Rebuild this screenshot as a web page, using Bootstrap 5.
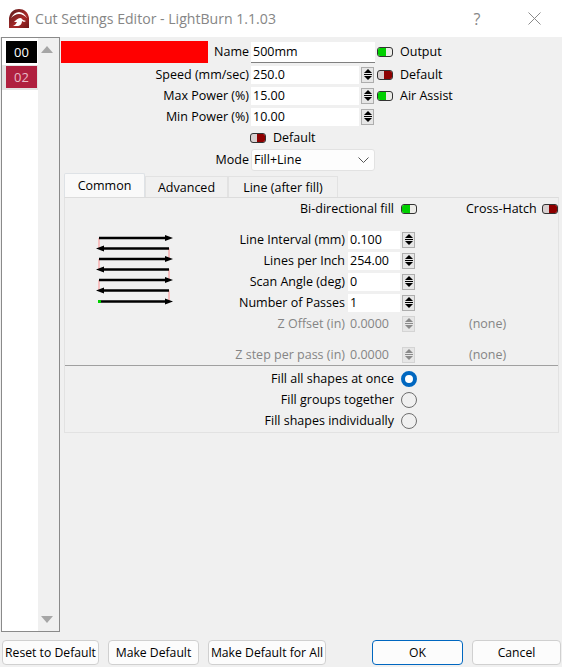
<!DOCTYPE html>
<html lang="en"><head><meta charset="utf-8"><title>Cut Settings Editor</title>
<link rel="stylesheet" href="https://cdn.jsdelivr.net/npm/bootstrap@5.3.0/dist/css/bootstrap.min.css">
<style>
html,body{height:667px;overflow:hidden}
body{width:562px;background:#f0f0f0;font:12.5px/16px "Open Sans","Noto Sans",sans-serif;color:#000}
.titlebar{height:37px;background:#fff;color:#868686;font-size:14.1px}
.applogo{margin:0 6px 0 9px}
.tb-help{width:58px;margin-right:22px;text-align:center;font-size:16px}
.tb-close{margin-right:21px}
.mainrow{height:595px}
.layerpanel{width:59px;margin:0 0 0 1px;border:1px solid #8a8a8a;background:#fff}
.layerlist{width:36px;padding-top:3px}
.layerchip{width:31px;height:22px;margin-left:4px;line-height:22px;text-align:center;color:#fff;font-size:13px}
.chip-black{background:#000;margin-bottom:2px}
.chip-red{background:#b0203f;color:#e9bcc7}
.chipwrap{background:#e4e4e4;height:25px;padding-top:1px;width:36px}
.scrollcol{width:21px;background:#f0f0f0;padding:8px 0}
.tri-up{width:0;height:0;border:6px solid transparent;border-top:0;border-bottom:7px solid #a6a6a6;margin-left:3px}
.tri-down{width:0;height:0;border:6px solid transparent;border-bottom:0;border-top:7px solid #a6a6a6;margin-left:3px}
.rightside{width:501px;padding:4px 0 0 1px}
.frow{height:21px;display:flex;align-items:center}
.namerow{height:23px;align-items:flex-start}
.namerow .lab,.namerow .tg-text{line-height:22px}
.namerow .toggler{margin-top:6px}
.swatch{width:147px;height:22px;background:#f00;flex:none}
.lab{text-align:right;flex:none;white-space:nowrap}
.lab-top{width:188px}
.lab-name{width:41px}
.fieldbox{background:#fff;height:18px;line-height:18px;padding-left:2px;margin-left:2px;flex:none}
.fb-top{width:108px}
.fb-name{width:124px;height:21px;line-height:20px;border-bottom:1px solid #808080;margin-top:1px}
.spin{width:13px;height:16px;margin-left:2px;border:1px solid #adadad;background:#e6e6e6;flex:none;display:flex;flex-direction:column;align-items:center;justify-content:center;gap:1px}
.spin i{display:block;width:0;height:0;border:4px solid transparent}
.spin i:first-child{border-top:0;border-bottom:4px solid #000}
.spin i:last-child{border-bottom:0;border-top:4px solid #000}
.spin b{display:block;width:8px;height:1px;background:#000}
.spin.off{border-color:#d4d4d4}
.spin.off i:first-child{border-bottom-color:#8a8a8a}
.spin.off i:last-child{border-top-color:#8a8a8a}
.spin.off b{background:#8a8a8a}
.toggler{width:16px;height:10px;border:1.5px solid #333;border-radius:3px;flex:none;display:flex;overflow:hidden;background:#ecece8}
.toggler span{display:block;width:8px;height:100%}
.tg-on span{background:#00d000}
.tg-off{background:#d8d0d0;justify-content:flex-end}
.tg-off span{background:#8e0000}
.tg-gap{margin-left:3px}
.namerow .tg-gap{margin-left:2px}
.tg-text{margin-left:7px}
.defrow{padding-left:189px}
.moderow{height:23px}
.lab-mode{width:188px}
.modebox{width:124px;height:22px;margin-left:2px;background:#fdfdfd;border:1px solid #e2e2e2;border-radius:3px;padding-left:2px;line-height:20px;display:flex;justify-content:space-between;align-items:center}
.chev{margin-right:5px}
.tabnav{margin:2px 0 0 3px;border-bottom:0;height:24px;align-items:flex-end;gap:0}
.tabnav .nav-link{height:21px;padding:2px 0 0;font-size:12.5px;line-height:17px;color:#000;background:#f0f0f0;border:1px solid #e2e2e2;border-bottom:0;border-radius:0;margin:0;text-align:center}
.tabnav .nav-link.active{height:24px;background:#f9f9f9;padding-top:3px;border-radius:2px 2px 0 0;color:#000}
.tab-a{width:81px}
.tab-b{width:83px}
.tab-c{width:110px}
.panebox{width:495px;height:236px;margin-left:3px;border:1px solid #e2e2e2;border-top-color:#dcdcdc}
.bidirow{height:22px}
.lab-bidi{width:329px}
.tg-bidi{margin-left:7px}
.lab-cross{margin-left:49px;width:69px}
.panelbody{margin-top:9px}
.diagram{width:100px;flex:none;padding:5px 0 0 31px}
.lab-pane{width:180px}
.fb-pane{width:52px;margin-left:3px}
.nonelab{margin-left:54px;color:#858585;white-space:nowrap}
.dim{color:#858585}
.fb-dim{background:transparent}
.gaprow{height:10px}
.divider{border-top:1px solid #a0a0a0;margin:0;opacity:1}
.radiorow{height:21px}
.lab-radio{width:329px}
.form-check-input.radq{width:16px;height:16px;margin:0 0 0 7px;flex:none;background-color:transparent;border:1.5px solid #6e6e6e}
.form-check-input.radq:checked{background-color:#fff;border:4.5px solid #0067c0;background-image:none}
.radiowrap{padding-top:2px}
.footbar{height:35px;padding:8px 1px 0 2px}
.dlgbtn{height:25px;padding:1px 0 0;font-size:12.2px;line-height:22px;color:#000;background:#fcfcfc;border:1px solid #d0d0d0;border-radius:4px;flex:none}
.btn-reset{width:97px}
.btn-md{width:91px;margin-left:9px}
.btn-mda{width:118px;margin-left:9px}
.btn-ok{width:91px;margin-left:46px;border:1.5px solid #0067c0}
.btn-cancel{width:89px;margin-left:9px}
</style></head><body>
<div class="titlebar d-flex align-items-center">
<svg class="applogo" width="20" height="20" viewBox="0 0 20 20"><defs><linearGradient id="lg" x1="0" y1="0" x2="1" y2="1"><stop offset="0" stop-color="#5a1a1a"/><stop offset=".6" stop-color="#a82a2a"/><stop offset="1" stop-color="#6e1616"/></linearGradient></defs><path d="M0 19V9C1 3 5 0 10 0s9 3 10 9v10z" fill="url(#lg)"/><path d="M2 9c2-4 5-6 8-6s6 2 8 6c-2-2-5-4-8-4S4 7 2 9z" fill="#fff"/><path d="M4 17c2-1 3-2 4-4l-3 0c2-2 4-4 7-4l2 2 3 1-2 1-2-1c0 3-2 5-5 5z" fill="#fff"/></svg>
<span class="flex-grow-1">Cut Settings Editor - LightBurn 1.1.03</span>
<span class="tb-help">?</span>
<svg class="tb-close" width="13" height="13" viewBox="0 0 13 13"><path d="M.5.5l12 12M12.5.5l-12 12" stroke="#8a8a8a" fill="none"/></svg>
</div>
<div class="mainrow d-flex">
<div class="layerpanel d-flex">
<div class="layerlist"><div class="layerchip chip-black">00</div><div class="chipwrap"><div class="layerchip chip-red">02</div></div></div>
<div class="scrollcol d-flex flex-column justify-content-between"><div class="tri-up"></div><div class="tri-down"></div></div>
</div>
<div class="rightside">
<div class="frow namerow"><div class="swatch"></div><div class="lab lab-name">Name</div><div class="fieldbox fb-name">500mm</div><div class="toggler tg-on tg-gap"><span></span></div><div class="tg-text">Output</div></div>
<div class="frow"><div class="lab lab-top">Speed (mm/sec)</div><div class="fieldbox fb-top">250.0</div><div class="spin"><i></i><b></b><i></i></div><div class="toggler tg-off tg-gap"><span></span></div><div class="tg-text">Default</div></div>
<div class="frow"><div class="lab lab-top">Max Power (%)</div><div class="fieldbox fb-top">15.00</div><div class="spin"><i></i><b></b><i></i></div><div class="toggler tg-on tg-gap"><span></span></div><div class="tg-text">Air Assist</div></div>
<div class="frow"><div class="lab lab-top">Min Power (%)</div><div class="fieldbox fb-top">10.00</div><div class="spin"><i></i><b></b><i></i></div></div>
<div class="frow defrow"><div class="toggler tg-off"><span></span></div><div class="tg-text">Default</div></div>
<div class="frow moderow"><div class="lab lab-mode">Mode</div><div class="modebox"><span>Fill+Line</span><svg class="chev" width="11" height="6" viewBox="0 0 11 6"><path d="M.5.5l5 5 5-5" stroke="#555" fill="none"/></svg></div></div>
<ul class="nav nav-tabs tabnav">
<li class="nav-item"><a class="nav-link active tab-a" href="#">Common</a></li>
<li class="nav-item"><a class="nav-link tab-b" href="#">Advanced</a></li>
<li class="nav-item"><a class="nav-link tab-c" href="#">Line (after fill)</a></li>
</ul>
<div class="panebox">
<div class="frow bidirow"><div class="lab lab-bidi">Bi-directional fill</div><div class="toggler tg-on tg-bidi"><span></span></div><div class="lab lab-cross">Cross-Hatch</div><div class="toggler tg-off tg-bidi"><span></span></div></div>
<div class="d-flex panelbody">
<div class="diagram">
<svg width="78" height="72" viewBox="0 0 78 72"><g fill="none" stroke="#f7b0b0" stroke-width="1.5"><path d="M3 4v10.500M73 14.500V25M3 25v10.500M73 35.500V46M3 46v10.500M73 56.500V67.500"/></g><g stroke="#000" stroke-width="2.300"><path d="M3 4h66M73 14.500H8M3 25h66M73 35.500H8M3 46h66M73 56.500H8M3 67.500h66"/></g><g fill="#000"><path d="M69 1l8 3-8 3zM8 11.500l-8 3 8 3zM69 22l8 3-8 3zM8 32.500l-8 3 8 3zM69 43l8 3-8 3zM8 53.500l-8 3 8 3zM69 64.500l8 3-8 3z"/></g><rect x="2" y="66" width="3" height="3" fill="#00d000"/></svg>
</div>
<div>
<div class="frow"><div class="lab lab-pane">Line Interval (mm)</div><div class="fieldbox fb-pane">0.100</div><div class="spin"><i></i><b></b><i></i></div></div>
<div class="frow"><div class="lab lab-pane">Lines per Inch</div><div class="fieldbox fb-pane">254.00</div><div class="spin"><i></i><b></b><i></i></div></div>
<div class="frow"><div class="lab lab-pane">Scan Angle (deg)</div><div class="fieldbox fb-pane">0</div><div class="spin"><i></i><b></b><i></i></div></div>
<div class="frow"><div class="lab lab-pane">Number of Passes</div><div class="fieldbox fb-pane">1</div><div class="spin"><i></i><b></b><i></i></div></div>
<div class="frow dim"><div class="lab lab-pane">Z Offset (in)</div><div class="fieldbox fb-pane fb-dim">0.0000</div><div class="spin off"><i></i><b></b><i></i></div><div class="nonelab">(none)</div></div>
<div class="gaprow"></div>
<div class="frow dim"><div class="lab lab-pane">Z step per pass (in)</div><div class="fieldbox fb-pane fb-dim">0.0000</div><div class="spin off"><i></i><b></b><i></i></div><div class="nonelab">(none)</div></div>
</div>
</div>
<hr class="divider">
<div class="radiowrap">
<label class="frow radiorow"><span class="lab lab-radio">Fill all shapes at once</span><input class="form-check-input radq" type="radio" name="fillmode" checked></label>
<label class="frow radiorow"><span class="lab lab-radio">Fill groups together</span><input class="form-check-input radq" type="radio" name="fillmode"></label>
<label class="frow radiorow"><span class="lab lab-radio">Fill shapes individually</span><input class="form-check-input radq" type="radio" name="fillmode"></label>
</div>
</div>
</div>
</div>
<div class="footbar d-flex">
<button class="btn dlgbtn btn-reset">Reset to Default</button>
<button class="btn dlgbtn btn-md">Make Default</button>
<button class="btn dlgbtn btn-mda">Make Default for All</button>
<button class="btn dlgbtn btn-ok">OK</button>
<button class="btn dlgbtn btn-cancel">Cancel</button>
</div>
</body></html>
